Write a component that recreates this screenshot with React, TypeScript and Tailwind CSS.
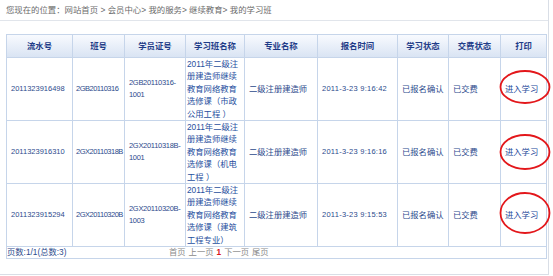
import type { FC } from 'react';

type Row = {
  serial: string;
  classNo: string;
  certA: string;
  certB: string;
  course: string[];
  major: string;
  time: string;
  ring: { cy: number; ry: number };
};

const rows: Row[] = [
  {
    serial: '2011323916498',
    classNo: '2GB20110316',
    certA: '2GB20110316-',
    certB: '1001',
    course: ['2011年二级注', '册建造师继续', '教育网络教育', '选修课（市政', '公用工程 ）'],
    major: '二级注册建造师',
    time: '2011-3-23 9:16:42',
    ring: { cy: 29, ry: 16 },
  },
  {
    serial: '2011323916310',
    classNo: '2GX20110318B',
    certA: '2GX20110318B-',
    certB: '1001',
    course: ['2011年二级注', '册建造师继续', '教育网络教育', '选修课（机电', '工程 ）'],
    major: '二级注册建造师',
    time: '2011-3-23 9:16:16',
    ring: { cy: 31, ry: 17 },
  },
  {
    serial: '2011323915294',
    classNo: '2GX20110320B',
    certA: '2GX20110320B-',
    certB: '1003',
    course: ['2011年二级注', '册建造师继续', '教育网络教育', '选修课（建筑', '工程专业）'],
    major: '二级注册建造师',
    time: '2011-3-23 9:15:53',
    ring: { cy: 29, ry: 20 },
  },
];

const headers = ['流水号', '班号', '学员证号', '学习班名称', '专业名称', '报名时间', '学习状态', '交费状态', '打印'];
const widths = ['w-[66px]', 'w-[52px]', 'w-[61px]', 'w-[59px]', 'w-[73px]', 'w-[80px]', 'w-[51px]', 'w-[52px]', 'w-[46px]'];

const cell = 'border border-[#c6d5ea] px-[4px] align-middle text-left';

const App: FC = () => {
  return (
    <div
      className="h-[275px] w-[549px] border-r border-b border-[#d9dee6] bg-white text-[8.3px] leading-[12.4px] text-[#2c4a8c]"
      style={{ fontFamily: '"Liberation Sans", "Noto Sans CJK SC", sans-serif' }}
    >
      <div className="flex h-[21px] items-center border-b border-[#e1e5eb] pl-[6px] text-[8.4px] text-[#6b6b6b]">
        您现在的位置：网站首页 &gt; 会员中心&gt; 我的服务&gt; 继续教育&gt; 我的学习班
      </div>

      <table className="mt-[13px] ml-[6px] w-[540px] table-fixed border-collapse">
        <colgroup>
          {widths.map((w, i) => (
            <col key={i} className={w} />
          ))}
        </colgroup>
        <thead>
          <tr className="h-[23px] bg-gradient-to-b from-[#f8fafe] to-[#d8e3f3]">
            {headers.map((h) => (
              <th
                key={h}
                className="border border-[#c6d5ea] text-center text-[8.4px] font-bold text-[#1f3c88]"
              >
                {h}
              </th>
            ))}
          </tr>
        </thead>
        <tbody>
          {rows.map((r) => (
            <tr key={r.serial} className="h-[62px]">
              <td className={`${cell} text-[7.5px]`}>{r.serial}</td>
              <td className={`${cell} whitespace-nowrap pl-[3px] text-[7.5px] tracking-[-0.5px]`}>{r.classNo}</td>
              <td className={`${cell} text-[7.5px] tracking-[-0.3px]`}>
                {r.certA}
                <br />
                {r.certB}
              </td>
              <td className="border border-[#c6d5ea] pl-[1px] align-middle text-[#1f4f9e]">
                {r.course.map((line) => (
                  <div key={line} className="whitespace-nowrap">
                    {line}
                  </div>
                ))}
              </td>
              <td className={cell}>{r.major}</td>
              <td className={`${cell} whitespace-nowrap text-[7.5px] tracking-[0.25px]`}>{r.time}</td>
              <td className={`${cell} whitespace-nowrap`}>已报名确认</td>
              <td className={cell}>已交费</td>
              <td className={`${cell} relative whitespace-nowrap`}>
                <span className="text-[#24489a]">进入学习</span>
                <svg
                  className="pointer-events-none absolute top-0 left-[-3px]"
                  width="54"
                  height="62"
                  viewBox="0 0 54 62"
                >
                  <ellipse
                    cx="27"
                    cy={r.ring.cy}
                    rx="24.5"
                    ry={r.ring.ry}
                    fill="none"
                    stroke="#e3171b"
                    strokeWidth="1.8"
                  />
                </svg>
              </td>
            </tr>
          ))}
          <tr className="h-[12px]">
            <td colSpan={9} className="border border-[#c6d5ea] p-0">
              <div className="flex items-center leading-[11px]">
                <span className="w-[162px] text-[#2c4a8c]">页数:1/1(总数:3)</span>
                <span className="flex gap-[3px] text-[#8a8a8a]">
                  <span>首页</span>
                  <span>上一页</span>
                  <span className="font-bold text-[#d9141b]">1</span>
                  <span>下一页</span>
                  <span>尾页</span>
                </span>
              </div>
            </td>
          </tr>
        </tbody>
      </table>
    </div>
  );
};

export default App;
